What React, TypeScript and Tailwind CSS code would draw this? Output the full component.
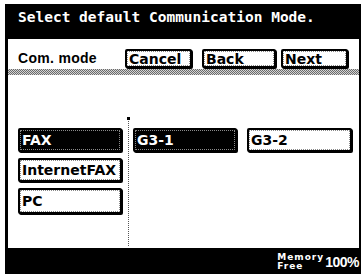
import React from "react"

function Btn({ label, selected = false, w, h = "h-[22px]" }: { label: string; selected?: boolean; w: string; h?: string }) {
  return (
    <div
      className={`${w} ${h} rounded-[2px] border-2 border-black shadow-[1px_1px_0_#000] ${
        selected ? "bg-black text-white" : "bg-white text-black"
      }`}
    >
      <div className="h-full border border-dotted border-[#8a8a8a] rounded-[1px] flex items-center pl-[1px] font-['DejaVu_Sans',sans-serif] text-[14px] font-bold leading-none">
        {label}
      </div>
    </div>
  )
}

export default function App() {
  return (
    <div className="w-[362px] h-[276px] bg-white pl-[5px] pt-[4px]">
      <div className="w-[356px] h-[270px] bg-black flex flex-col pl-[3px] pr-[2px]">
        <div className="h-[35px] shrink-0 pl-[10px] pt-[5px] text-white font-['DejaVu_Sans_Mono',monospace] text-[14.5px] font-bold leading-[16px] whitespace-nowrap">
          Select default Communication Mode.
        </div>

        <div className="h-[209px] shrink-0 bg-white flex flex-col">
          <div className="h-[30px] shrink-0 flex items-start pt-[10px] pl-[10px]">
            <span className="w-[107px] pt-[1px] font-['Liberation_Sans',sans-serif] text-[14px] font-bold leading-[16px] tracking-[0.3px]">
              Com. mode
            </span>
            <Btn label="Cancel" w="w-[67px]" h="h-[19px]" />
            <div className="w-[10px]" />
            <Btn label="Back" w="w-[74px]" h="h-[19px]" />
            <div className="w-[5px]" />
            <Btn label="Next" w="w-[67px]" h="h-[19px]" />
          </div>
          <div className="h-[6px] shrink-0 bg-[repeating-conic-gradient(#6b6b6b_0_25%,#d4d4d4_0_50%)] bg-[length:2px_2px]" />

          <div className="flex-1 flex">
            <div className="w-[120px] pl-[10px] pt-[53px] flex flex-col gap-[6px]">
              <Btn label="FAX" selected w="w-[104px]" h="h-[24px]" />
              <Btn label="InternetFAX" w="w-[104px]" h="h-[24px]" />
              <Btn label="PC" w="w-[104px]" h="h-[26px]" />
            </div>
            <div className="relative mt-[43px] mb-[2px] border-l border-dotted border-[#555]">
              <div className="absolute -left-[2px] -top-[1px] w-[3px] h-[3px] bg-black" />
            </div>
            <div className="pl-[4px] pt-[53px] flex gap-[10px] items-start">
              <Btn label="G3-1" selected w="w-[104px]" h="h-[24px]" />
              <Btn label="G3-2" w="w-[105px]" h="h-[24px]" />
            </div>
          </div>
        </div>

        <div className="flex-1 flex justify-end items-center pt-[1px] text-white">
          <div className="flex flex-col font-['DejaVu_Sans',sans-serif] text-[9px] font-bold leading-[9px] tracking-[1px] mr-[1px]">
            <span>Memory</span>
            <span>Free</span>
          </div>
          <span className="font-['Liberation_Sans',sans-serif] text-[14px] font-bold leading-none tracking-[-0.5px]">
            100%
          </span>
        </div>
      </div>
    </div>
  )
}
